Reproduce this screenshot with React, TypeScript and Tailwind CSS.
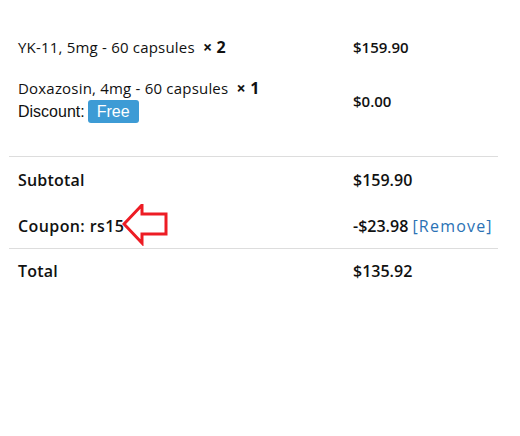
export default function App() {
	const font = { fontFamily: '"Open Sans", "Liberation Sans", sans-serif' };

	return (
		<div className="w-[520px] h-[436px] bg-white text-[#111]" style={font}>
			<div className="pt-[25px] px-[9px] w-[507px]">
				{/* Cart items */}
				<div className="flex h-[44px] items-center">
					<div className="w-[335px] pl-[9px] text-[15px] tracking-[0.2px]">
						YK-11, 5mg - 60 capsules <strong className="font-bold ml-1 text-[16px]">× 2</strong>
					</div>
					<div className="pl-[9px] text-[15px] font-semibold">$159.90</div>
				</div>
				<div className="flex h-[64px] items-center">
					<div className="w-[335px] pl-[9px]">
						<div className="text-[15px] tracking-[0.2px] leading-[18px]">
							Doxazosin, 4mg - 60 capsules <strong className="font-bold ml-1 text-[16px]">× 1</strong>
						</div>
						<div className="flex items-center mt-[3px] text-[16px]" style={{ fontFamily: '"Liberation Sans", Arial, sans-serif' }}>
							Discount:
							<span className="ml-[3px] bg-[#3d9bd5] text-white rounded-[3px] px-[9px] h-[23px] leading-[23px]">Free</span>
						</div>
					</div>
					<div className="pl-[9px] text-[15px] font-semibold">$0.00</div>
				</div>
				<div className="h-[23px]" />

				{/* Totals */}
				<div className="border-t border-[#dddddd] flex h-[47px] items-center">
					<div className="w-[335px] pl-[9px] text-[16px] font-semibold tracking-[0.2px]">Subtotal</div>
					<div className="pl-[9px] text-[16px] font-semibold">$159.90</div>
				</div>
				<div className="flex h-[45px] items-center">
					<div className="w-[335px] pl-[9px] text-[16px] font-semibold tracking-[0.4px] relative">
						Coupon: rs15
						<svg className="absolute left-[113px] top-[-10px]" width="46" height="42" viewBox="0 0 46 42">
							<polygon
								points="2,20 20,1 20,10 44,10 44,30 20,30 20,39"
								fill="none"
								stroke="#ed1c24"
								strokeWidth="3"
								strokeLinejoin="miter"
							/>
						</svg>
					</div>
					<div className="pl-[9px] text-[16px]">
						<span className="font-semibold">-$23.98</span>{" "}
						<a className="text-[#2a72b5] tracking-[1.2px]">[Remove]</a>
					</div>
				</div>
				<div className="border-t border-[#dddddd] flex h-[45px] items-center">
					<div className="w-[335px] pl-[9px] text-[16px] font-semibold tracking-[0.2px]">Total</div>
					<div className="pl-[9px] text-[16px] font-semibold">$135.92</div>
				</div>
			</div>
		</div>
	);
}
